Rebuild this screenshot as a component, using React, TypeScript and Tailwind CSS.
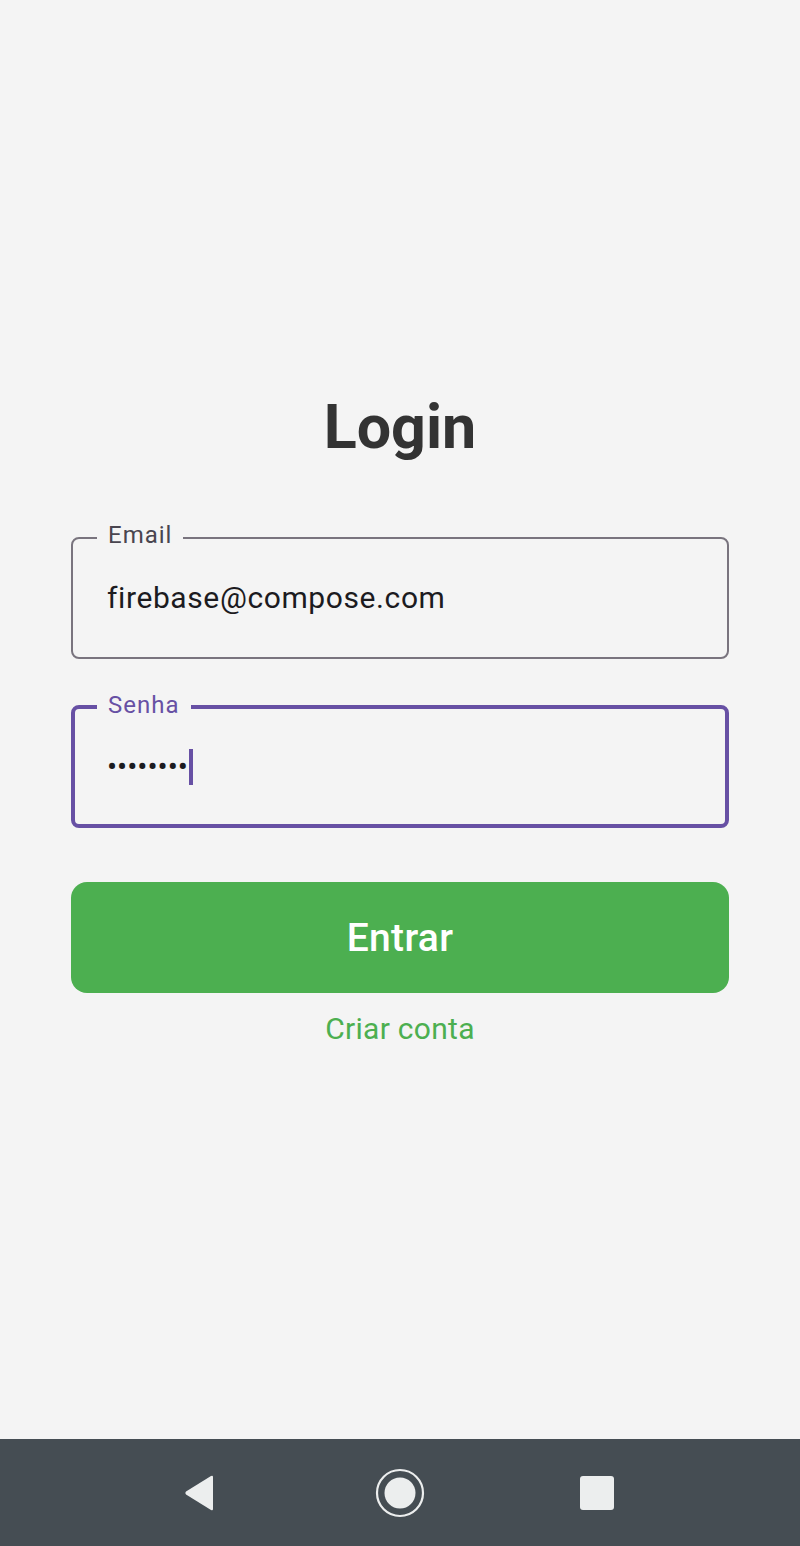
const font = "font-['Roboto','Liberation_Sans',sans-serif]";

function OutlinedField({
  label,
  focused,
  children,
}: {
  label: string;
  focused?: boolean;
  children: React.ReactNode;
}) {
  return (
    <div
      className={
        focused
          ? 'relative h-[123px] rounded-[8px] border-[4px] border-[#6750a4] flex items-center pl-[32px]'
          : 'relative h-[122px] rounded-[8px] border-2 border-[#79747e] flex items-center pl-[34px]'
      }
    >
      <span
        className={
          focused
            ? 'absolute left-[22px] top-[-16px] px-[11px] bg-[#f4f4f4] text-[24px] leading-[24px] tracking-[1px] text-[#6750a4]'
            : 'absolute left-[24px] top-[-16px] px-[11px] bg-[#f4f4f4] text-[24px] leading-[24px] tracking-[1px] text-[#49454f]'
        }
      >
        {label}
      </span>
      {children}
    </div>
  );
}

export default function App() {
  return (
    <div className={`${font} w-[800px] h-[1546px] flex flex-col bg-[#f4f4f4]`}>
      <main className="h-[1439px] flex flex-col px-[71px] pt-[391px]">
        <h1 className="text-center text-[61px] leading-[72px] font-bold text-[#333333]">Login</h1>

        <div className="mt-[74px] flex flex-col gap-[46px]">
          <OutlinedField label="Email">
            <span className="text-[30px] leading-[36px] tracking-[0.6px] text-[#1c1b1f]">
              firebase@compose.com
            </span>
          </OutlinedField>

          <OutlinedField label="Senha" focused>
            <span className="text-[30px] leading-[36px] text-[#1c1b1f]">••••••••</span>
            <span className="ml-[1px] w-[4px] h-[36px] bg-[#6750a4]" />
          </OutlinedField>
        </div>

        <button className="mt-[54px] h-[111px] rounded-[16px] bg-[#4caf50] text-white text-[39px] leading-[44px] font-medium tracking-[0.3px]">
          Entrar
        </button>

        <button className="mt-[18px] self-center text-[30px] leading-[36px] tracking-[0.3px] text-[#4caf50]">
          Criar conta
        </button>
      </main>

      <nav className="flex-1 bg-[#454d53] flex items-center justify-center">
        <div className="w-[200px] flex justify-center">
          <svg width="34" height="38" viewBox="0 0 34 38">
            <path d="M30 3 L30 35 Q30 37 28 36 L3 20.5 Q1.5 19 3 17.5 L28 2 Q30 1 30 3 Z" fill="#eceeee" />
          </svg>
        </div>
        <div className="w-[200px] flex justify-center">
          <svg width="50" height="50" viewBox="0 0 50 50">
            <circle cx="25" cy="25" r="23" fill="none" stroke="#eceeee" strokeWidth="2.2" />
            <circle cx="25" cy="25" r="15.5" fill="#eceeee" />
          </svg>
        </div>
        <div className="w-[200px] flex justify-center">
          <div className="ml-[-6px] w-[34px] h-[34px] rounded-[3px] bg-[#eceeee]" />
        </div>
      </nav>
    </div>
  );
}
